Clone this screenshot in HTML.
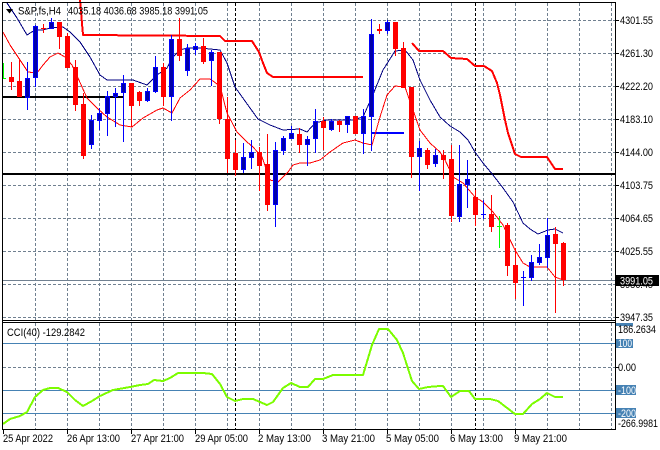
<!DOCTYPE html>
<html>
<head>
<meta charset="utf-8">
<style>
html,body{margin:0;padding:0;background:#fff}
svg{display:block}
text{font-family:"Liberation Sans",sans-serif;font-size:11px;fill:#000}
</style>
</head>
<body>
<svg width="660" height="450" viewBox="0 0 660 450" xmlns="http://www.w3.org/2000/svg">
<rect width="660" height="450" fill="#fff"/>

<!-- grid -->
<g shape-rendering="crispEdges" fill="none" stroke="#708090" stroke-width="1" stroke-dasharray="3 2">
<path d="M3 20.5H615M3 53.5H615M3 86.5H615M3 119.5H615M3 152.5H615M3 185.5H615M3 218.5H615M3 251.5H615M3 284.5H615M3 317.5H615M3 367.5H615"/>
<path d="M35.5 3V320M67.5 3V320M99.5 3V320M131.5 3V320M163.5 3V320M195.5 3V320M227.5 3V320M259.5 3V320M291.5 3V320M323.5 3V320M355.5 3V320M387.5 3V320M419.5 3V320M451.5 3V320M483.5 3V320M515.5 3V320M547.5 3V320M579.5 3V320M611.5 3V320"/>
<path d="M35.5 323V429M67.5 323V429M99.5 323V429M131.5 323V429M163.5 323V429M195.5 323V429M227.5 323V429M259.5 323V429M291.5 323V429M323.5 323V429M355.5 323V429M387.5 323V429M419.5 323V429M451.5 323V429M483.5 323V429M515.5 323V429M547.5 323V429M579.5 323V429M611.5 323V429"/>
</g>
<g shape-rendering="crispEdges" fill="none" stroke="#000" stroke-width="1" stroke-dasharray="3 2">
<path d="M235.5 3V429M475.5 3V429"/>
</g>

<!-- horizontal levels -->
<g shape-rendering="crispEdges">
<rect x="3" y="280" width="612" height="1" fill="#708090"/>
<rect x="3" y="96" width="120" height="2" fill="#000"/>
<rect x="3" y="173" width="612" height="2" fill="#000"/>
<rect x="372" y="132" width="32" height="2" fill="#0000ff"/>
<rect x="3" y="343" width="612" height="1" fill="#4682b4"/>
<rect x="3" y="390" width="612" height="1" fill="#4682b4"/>
<rect x="3" y="413" width="612" height="1" fill="#4682b4"/>
</g>

<!-- thick red stop line -->
<g fill="none" stroke="#ff0000" stroke-width="2" shape-rendering="crispEdges" stroke-linejoin="round">
<polyline points="80,0 83,35 220,36 225,41 252,41 259,52 263,63 267,73 273,77 363,77"/>
<polyline points="412,43 419,51 443,51 451,58 467,59 475,66 484,66 492,71 497,83 500,95 505,120 508,133 515,154 521,157 547,157 555,169 563,169"/>
</g>

<!-- navy MA -->
<g fill="none" stroke="#000080" stroke-width="1" shape-rendering="crispEdges">
<polyline points="7,3 17,18 27,35 35,30 43,30 50,28 63,27 70,32 80,42 90,57 100,75 107,80 117,80 133,80 147,85 157,75 167,68 173,57 180,50 187,48 200,48 220,50 227,63 235,87 250,108 258,119 270,125 283,130 300,129 307,132 315,123 327,120 353,120 363,117 372,97 383,70 395,51 405,50 413,60 420,80 430,100 440,117 450,126 460,132 468,140 475,152 483,163 493,175 503,188 513,202 523,223 530,229 538,234 548,230 555,229 563,233"/>
</g>

<!-- red MA -->
<g fill="none" stroke="#ff0000" stroke-width="1" shape-rendering="crispEdges">
<polyline points="3,32 10,45 20,60 28,72 37,73 43,65 50,57 58,53 65,57 72,65 78,78 87,98 97,108 107,117 120,125 132,127 143,118 157,110 163,108 172,113 180,98 190,90 200,79 210,79 220,86 227,113 237,132 247,142 253,147 262,157 270,180 278,182 288,172 293,165 300,163 310,163 320,160 330,152 343,143 355,140 363,143 372,145 380,117 387,95 395,86 405,87 413,110 420,130 430,143 440,152 445,160 453,177 463,183 475,197 483,202 493,212 503,225 515,250 523,263 530,267 547,267 555,277 563,280"/>
</g>

<!-- CCI -->
<g fill="none" stroke="#7cfc00" stroke-width="2" shape-rendering="crispEdges" stroke-linejoin="round">
<polyline points="3,424 10,419 20,416 27,412 35,397 43,390 50,388 58,388 67,392 75,400 83,406 92,401 100,396 113,390 130,387 140,385 148,384 154,380 163,381 170,378 178,373 185,373 193,373 203,373 212,374 220,384 227,397 235,401 243,399 253,399 267,405 273,402 283,388 291,383 300,387 308,387 315,379 323,379 333,375 363,375 372,345 379,329 388,329 397,340 403,353 412,381 419,389 428,387 440,386 443,386 451,397 460,391 469,391 475,399 490,399 498,401 515,414 523,414 532,404 540,399 547,393 555,397 563,397"/>
</g>

<!-- candles: wicks -->
<g fill="none" shape-rendering="crispEdges" stroke-width="1">
<path stroke="#ff0000" d="M11.5 62V90M19.5 59V97M43.5 24V33M59.5 22V49M67.5 33V68M75.5 60V111M83.5 93V159M131.5 83V127M139.5 91V106M163.5 63V106M179.5 18V61M203.5 38V64M219.5 52V124M227.5 97V173M235.5 140V176M259.5 147V191M267.5 134V211M299.5 128V153M323.5 117V150M339.5 120V132M355.5 116V134M379.5 24V34M395.5 22V56M403.5 42V88M411.5 87V178M427.5 148V169M443.5 150V179M451.5 145V222M475.5 190V226M491.5 195V232M507.5 223V276M515.5 248V299M555.5 227V313M563.5 242V286"/>
<path stroke="#0000ff" d="M27.5 62V110M35.5 25V87M51.5 18V29M91.5 115V149M99.5 108V130M107.5 91V136M115.5 88V127M123.5 75V142M147.5 88V102M155.5 56V93M171.5 35V121M187.5 44V76M195.5 43V55M211.5 50V86M243.5 143V173M251.5 140V169M275.5 142V227M283.5 136V155M291.5 126V139M307.5 136V166M315.5 109V153M331.5 119V131M347.5 116V133M363.5 109V154M371.5 19V151M387.5 20V34M419.5 141V191M435.5 149V167M459.5 145V222M467.5 160V208M483.5 200V219M523.5 271V306M531.5 255V281M539.5 244V265M547.5 218V268"/>
<path stroke="#00ff00" d="M3.5 63V79M499.5 216V248"/>
</g>

<!-- candles: bodies -->
<g shape-rendering="crispEdges">
<path fill="#ff0000" d="M9 77h5v5h-5zM17 81h5v16h-5zM41 28h5v1h-5zM57 22h5v15h-5zM65 36h5v32h-5zM73 67h5v38h-5zM81 104h5v52h-5zM129 83h5v23h-5zM137 92h5v9h-5zM161 67h5v30h-5zM177 39h5v17h-5zM201 46h5v16h-5zM217 52h5v67h-5zM225 119h5v40h-5zM233 153h5v17h-5zM257 152h5v14h-5zM265 164h5v41h-5zM297 134h5v11h-5zM321 121h5v7h-5zM337 121h5v4h-5zM353 116h5v18h-5zM377 29h5v2h-5zM393 22h5v27h-5zM401 48h5v40h-5zM409 87h5v70h-5zM425 150h5v15h-5zM441 155h5v5h-5zM449 159h5v57h-5zM473 197h5v18h-5zM489 214h5v13h-5zM505 225h5v41h-5zM513 265h5v18h-5zM553 234h5v10h-5zM561 243h5v37h-5z"/>
<path fill="#0000a8" stroke="#0000ff" stroke-width="1" d="M25.5 78.5h4v19h-4zM33.5 26.5h4v51h-4zM49.5 22.5h4v6h-4zM89.5 120.5h4v24h-4zM97.5 113.5h4v7h-4zM105.5 96.5h4v17h-4zM113.5 93.5h4v3h-4zM121.5 83.5h4v9h-4zM145.5 91.5h4v9h-4zM153.5 67.5h4v24h-4zM169.5 39.5h4v57h-4zM185.5 48.5h4v22h-4zM193.5 46.5h4v3h-4zM209.5 52.5h4v8h-4zM241.5 157.5h4v12h-4zM249.5 152.5h4v5h-4zM273.5 150.5h4v54h-4zM281.5 138.5h4v12h-4zM289.5 133.5h4v5h-4zM305.5 139.5h4v5h-4zM313.5 121.5h4v17h-4zM329.5 121.5h4v8h-4zM345.5 116.5h4v8h-4zM361.5 116.5h4v17h-4zM369.5 34.5h4v82h-4zM385.5 22.5h4v8h-4zM417.5 148.5h4v8h-4zM433.5 155.5h4v8h-4zM457.5 184.5h4v32h-4zM465.5 179.5h4v5h-4zM529.5 262.5h4v15h-4zM537.5 257.5h4v5h-4zM545.5 235.5h4v22h-4z"/>
<rect x="481" y="214" width="5" height="1" fill="#0000ff"/>
<rect x="521" y="277" width="5" height="1" fill="#0000ff"/>
<rect x="497" y="226" width="5" height="1" fill="#00ff00"/>
<rect x="3" y="78" width="3" height="1" fill="#00ff00"/>
</g>

<!-- frames -->
<g shape-rendering="crispEdges" fill="#000">
<rect x="2" y="2" width="614" height="1"/>
<rect x="2" y="2" width="1" height="428"/>
<rect x="615" y="2" width="1" height="428"/>
<rect x="2" y="320" width="614" height="1"/>
<rect x="2" y="322" width="614" height="1"/>
<rect x="2" y="429" width="614" height="1"/>
<path d="M616 20h3v1h-3zM616 53h3v1h-3zM616 86h3v1h-3zM616 119h3v1h-3zM616 152h3v1h-3zM616 185h3v1h-3zM616 218h3v1h-3zM616 251h3v1h-3zM616 284h3v1h-3zM616 317h3v1h-3zM616 367h3v1h-3z"/>
<path d="M3 430h1v4h-1zM67 430h1v4h-1zM131 430h1v4h-1zM195 430h1v4h-1zM259 430h1v4h-1zM323 430h1v4h-1zM387 430h1v4h-1zM451 430h1v4h-1zM515 430h1v4h-1z"/>
</g>

<!-- header -->
<polygon points="6,9 13,9 9.5,13.5" fill="#000"/>
<text x="18" y="14.5" textLength="43" lengthAdjust="spacingAndGlyphs">S&amp;P,fs,H4</text>
<text x="68" y="14.5" textLength="140" lengthAdjust="spacingAndGlyphs">4035.18 4036.68 3985.18 3991.05</text>

<!-- price axis -->
<text x="620" y="24" textLength="33" lengthAdjust="spacingAndGlyphs">4301.55</text>
<text x="620" y="57" textLength="33" lengthAdjust="spacingAndGlyphs">4261.30</text>
<text x="620" y="90" textLength="33" lengthAdjust="spacingAndGlyphs">4222.20</text>
<text x="620" y="123" textLength="33" lengthAdjust="spacingAndGlyphs">4183.10</text>
<text x="620" y="156" textLength="33" lengthAdjust="spacingAndGlyphs">4144.00</text>
<text x="620" y="189" textLength="33" lengthAdjust="spacingAndGlyphs">4103.75</text>
<text x="620" y="222" textLength="33" lengthAdjust="spacingAndGlyphs">4064.65</text>
<text x="620" y="255" textLength="33" lengthAdjust="spacingAndGlyphs">4025.55</text>
<text x="620" y="288" textLength="33" lengthAdjust="spacingAndGlyphs">3986.45</text>
<text x="620" y="321" textLength="33" lengthAdjust="spacingAndGlyphs">3947.35</text>
<rect x="616" y="275" width="43" height="11" fill="#000" shape-rendering="crispEdges"/>
<text x="620" y="284.5" textLength="33" lengthAdjust="spacingAndGlyphs" style="fill:#fff">3991.05</text>

<!-- CCI labels -->
<text x="7" y="336" textLength="78" lengthAdjust="spacingAndGlyphs">CCI(40) -129.2842</text>
<g shape-rendering="crispEdges" fill="#4682b4">
<rect x="616" y="323" width="17" height="3"/>
<rect x="616" y="339" width="17" height="9"/>
<rect x="616" y="385" width="20" height="10"/>
<rect x="616" y="408" width="20" height="10"/>
</g>
<text x="618" y="333" textLength="38" lengthAdjust="spacingAndGlyphs">186.2634</text>
<text x="618" y="347" textLength="14" lengthAdjust="spacingAndGlyphs" style="fill:#fff">100</text>
<text x="618" y="371" textLength="18" lengthAdjust="spacingAndGlyphs">0.00</text>
<text x="618" y="394" textLength="18" lengthAdjust="spacingAndGlyphs" style="fill:#fff">-100</text>
<text x="618" y="417" textLength="18" lengthAdjust="spacingAndGlyphs" style="fill:#fff">-200</text>
<text x="618" y="427" textLength="40" lengthAdjust="spacingAndGlyphs">-266.9981</text>

<!-- time axis -->
<text x="3" y="442" textLength="50" lengthAdjust="spacingAndGlyphs">25 Apr 2022</text>
<text x="67" y="442" textLength="53" lengthAdjust="spacingAndGlyphs">26 Apr 13:00</text>
<text x="131" y="442" textLength="53" lengthAdjust="spacingAndGlyphs">27 Apr 21:00</text>
<text x="195" y="442" textLength="53" lengthAdjust="spacingAndGlyphs">29 Apr 05:00</text>
<text x="258" y="442" textLength="53" lengthAdjust="spacingAndGlyphs">2 May 13:00</text>
<text x="322" y="442" textLength="53" lengthAdjust="spacingAndGlyphs">3 May 21:00</text>
<text x="386" y="442" textLength="53" lengthAdjust="spacingAndGlyphs">5 May 05:00</text>
<text x="450" y="442" textLength="53" lengthAdjust="spacingAndGlyphs">6 May 13:00</text>
<text x="514" y="442" textLength="53" lengthAdjust="spacingAndGlyphs">9 May 21:00</text>
</svg>
</body>
</html>
